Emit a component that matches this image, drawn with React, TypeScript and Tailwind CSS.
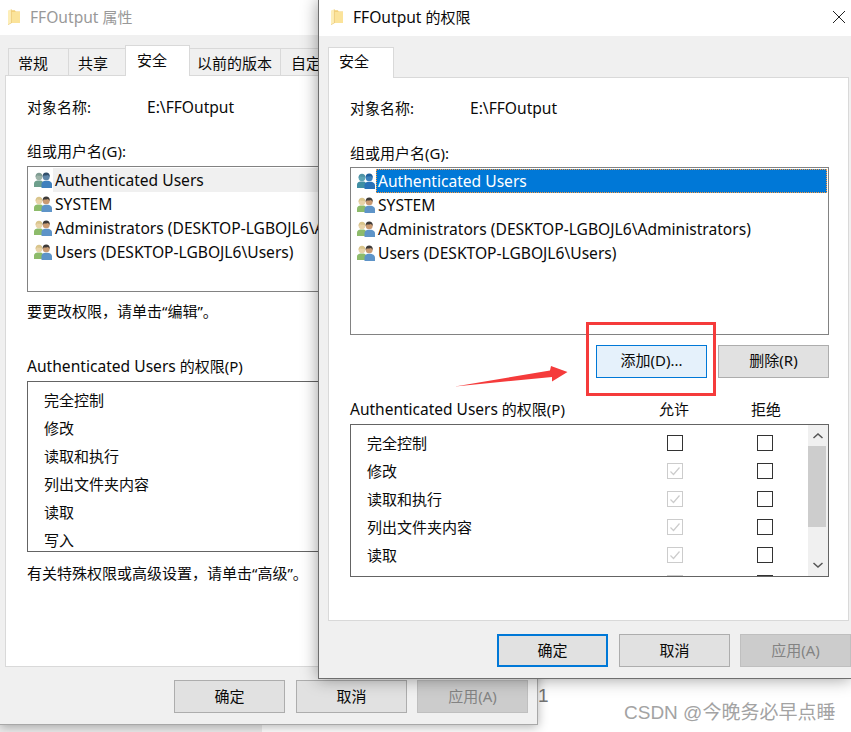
import { ReactNode } from "react";

const users = [
    "Authenticated Users",
    "SYSTEM",
    "Administrators (DESKTOP-LGBOJL6\\Administrators)",
    "Users (DESKTOP-LGBOJL6\\Users)",
];
const backRights = ["完全控制", "修改", "读取和执行", "列出文件夹内容", "读取", "写入"];

function Folder({ className }: { className: string }) {
    return (
        <svg viewBox="0 0 14 18" className={className}>
            <path d="M3 1h5l1 1.500h5V16H3z" fill="#f3cf74" />
            <path d="M4 3h10v13H4z" fill="#fbe39a" />
            <path d="M0 1.500 4 0v16l-4 2z" fill="#fdeeb8" />
            <path d="M4 0v16l-4 2" fill="none" stroke="#e6bf66" strokeWidth="0.6" />
        </svg>
    );
}

// two people side by side, colours change for hover and selected rows
function UsersIcon({ tone = "normal" }: { tone?: "normal" | "hover" | "selected" }) {
    const c = {
        normal: { h1: "#d9c58c", f1: "#e8d3a8", b1: "#8dbb6a", h2: "#3d3a38", f2: "#c99a72", b2: "#5e94c8" },
        hover: { h1: "#7f9c92", f1: "#9db3a8", b1: "#6d9f8c", h2: "#33506b", f2: "#5f86a8", b2: "#3f80bd" },
        selected: { h1: "#4f93a6", f1: "#5ea5b5", b1: "#3f8ea3", h2: "#1f5f9e", f2: "#3a7fbc", b2: "#2a72b8" },
    }[tone];
    return (
        <svg viewBox="0 0 18 16" className="w-[18px] h-4 shrink-0">
            <path d="M0 15v-3.500C0 9.500 2 8.800 3.500 8.500h3C8 8.800 9.500 9.800 9.500 12v3z" fill={c.b1} />
            <circle cx="5" cy="4.800" r="3.400" fill={c.f1} />
            <path d="M1.600 5C1.400 2 3 .8 5 .8S8.500 2 8.400 4.200C7 4 4.500 3.800 3.400 3.200 3 4 2.400 4.800 1.600 5z" fill={c.h1} />
            <path d="M7.500 16v-3.500c0-2.500 2-3.500 3.500-3.700h2.500c2 .2 4.500 1.200 4.500 3.700V16z" fill={c.b2} />
            <circle cx="12.200" cy="4.800" r="3.500" fill={c.f2} />
            <path d="M8.700 5C8.400 2 10 .6 12.200 .6S15.900 2 15.700 4.800C14.800 4.200 14.400 3.400 14 3c-1.500.5-3 .6-4.400.5C9.400 4 9.200 4.600 8.700 5z" fill={c.h2} />
        </svg>
    );
}

function Btn({ children, className }: { children: ReactNode; className: string }) {
    return (
        <div className={`w-[111px] h-[33px] flex items-center justify-center shrink-0 ${className}`}>
            {children}
        </div>
    );
}

function Check({ disabled }: { disabled?: boolean }) {
    if (disabled) {
        return (
            <div className="size-4 border border-[#cccccc] shrink-0 flex items-center justify-center">
                <svg viewBox="0 0 14 14" className="size-3.5">
                    <path d="M2.500 7.500 5.500 10.500 11.500 3.500" fill="none" stroke="#cccccc" strokeWidth="1.200" />
                </svg>
            </div>
        );
    }
    return <div className="size-4 border border-[#333333] shrink-0" />;
}

function BackWindow() {
    return (
        <div className="absolute left-0 top-0 w-[538px] h-[725px] bg-[#f0f0f0] border-r border-b border-[#a8a8a8] shadow-[0_2px_10px_rgba(0,0,0,0.3)] overflow-hidden">
            <div className="h-[35px] pb-0.5 bg-white flex items-center pl-2 gap-2.5 text-[#999999]">
                <Folder className="w-3 h-4" />
                <span><span className="text-[15.6px]">FFOutput</span> 属性</span>
            </div>
            <div className="h-10 flex items-end pl-2">
                <div className="w-[60px] h-[27px] pl-[9px] pt-1 border-t border-l border-[#d9d9d9]">常规</div>
                <div className="w-[57px] h-[27px] pl-[9px] pt-1 border-t border-l border-[#d9d9d9]">共享</div>
                <div className="relative w-[65px] h-[31px] -mb-px pl-[11px] pt-1 bg-white border-t border-x border-[#d9d9d9]">安全</div>
                <div className="w-[90px] h-[27px] pl-[7px] pt-1 border-t border-[#d9d9d9]">以前的版本</div>
                <div className="w-[70px] h-[27px] pl-2.5 pt-1 border-t border-x border-[#d9d9d9]">自定义</div>
            </div>
            <div className="ml-[5px] w-[527px] h-[592px] bg-white border border-[#d9d9d9] pl-[21px] pt-[21px]">
                <div className="flex h-5">
                    <span className="w-[120px]">对象名称:</span>
                    <span className="text-[15.6px]">E:\FFOutput</span>
                </div>
                <div className="mt-6 h-5">组或用户名(G):</div>
                <div className="mt-[5px] w-[480px] h-[126px] border border-[#828282] p-px">
                    {users.map((u, i) => (
                        <div key={u} className="h-6 flex items-center pl-[5px] whitespace-nowrap overflow-hidden">
                            <UsersIcon tone={i === 0 ? "hover" : "normal"} />
                            <span className={`ml-px pl-0.5 h-6 leading-6 flex-1 text-[15.6px] ${i === 0 ? "bg-[#f0f0f0]" : ""}`}>{u}</span>
                        </div>
                    ))}
                </div>
                <div className="mt-[9px] h-5">要更改权限，请单击“编辑”。</div>
                <div className="mt-[35px] h-5"><span className="text-[15.6px]">Authenticated Users</span> 的权限(P)</div>
                <div className="mt-[5px] w-[480px] h-[171px] border border-[#646464] pt-1 pl-4 overflow-hidden">
                    {backRights.map((r) => (
                        <div key={r} className="h-7 flex items-center">{r}</div>
                    ))}
                </div>
                <div className="mt-[11px] h-5">有关特殊权限或高级设置，请单击“高级”。</div>
            </div>
            <div className="mt-[13px] ml-[174px] flex">
                <Btn className="pb-0.5 bg-[#e1e1e1] border border-[#adadad]">确定</Btn>
                <Btn className="pb-0.5 ml-[11px] bg-[#e1e1e1] border border-[#adadad]">取消</Btn>
                <Btn className="pb-0.5 ml-2.5 bg-[#cccccc] border border-[#bfbfbf] text-[#838383]">应用(A)</Btn>
            </div>
        </div>
    );
}

function FrontWindow() {
    const rows = [
        { name: "完全控制", allowed: false },
        { name: "修改", allowed: true },
        { name: "读取和执行", allowed: true },
        { name: "列出文件夹内容", allowed: true },
        { name: "读取", allowed: true },
        { name: "", allowed: true }, // next row, scrolled mostly out of view
    ];
    return (
        <div className="absolute left-[318px] top-0 w-[533px] h-[679px] bg-[#f0f0f0] border-l border-b border-[#6e6e6e] shadow-[0_0_16px_rgba(0,0,0,0.4)] overflow-hidden">
            <div className="h-9 pb-0.5 bg-white flex items-center pl-3 gap-2.5">
                <Folder className="w-3 h-4" />
                <span className="flex-1"><span className="text-[15.6px]">FFOutput</span> 的权限</span>
                <svg viewBox="0 0 12 12" className="size-3 mr-1.5">
                    <path d="M0 0 12 12M12 0 0 12" stroke="#222222" strokeWidth="1" />
                </svg>
            </div>
            <div className="h-[41px] flex items-end pl-[9px]">
                <div className="relative w-[66px] h-[31px] -mb-px pl-2.5 pt-[3px] bg-white border-t border-x border-[#d9d9d9]">安全</div>
            </div>
            <div className="ml-[9px] w-[521px] h-[544px] bg-white border border-[#d9d9d9] pl-[21px] pt-5">
                <div className="flex h-5">
                    <span className="w-[120px]">对象名称:</span>
                    <span className="text-[15.6px]">E:\FFOutput</span>
                </div>
                <div className="mt-[25px] h-5">组或用户名(G):</div>
                <div className="mt-1 w-[479px] h-[168px] border border-[#828282] p-px">
                    {users.map((u, i) => (
                        <div key={u} className="h-6 flex items-center pl-[5px] whitespace-nowrap">
                            <UsersIcon tone={i === 0 ? "selected" : "normal"} />
                            {i === 0 ? (
                                <span className="ml-px pl-0.5 h-6 leading-6 flex-1 text-[15.6px] bg-[#0078d7] text-white outline outline-dotted outline-[#ff9a3c] -outline-offset-1">{u}</span>
                            ) : (
                                <span className="ml-px pl-0.5 h-6 leading-6 text-[15.6px]">{u}</span>
                            )}
                        </div>
                    ))}
                </div>
                <div className="mt-2.5 w-[479px] flex justify-end gap-[11px]">
                    <Btn className="pb-[3px] bg-[#e5f1fb] border border-[#0078d7]">添加(D)...</Btn>
                    <Btn className="pb-[3px] bg-[#e1e1e1] border border-[#adadad]">删除(R)</Btn>
                </div>
                <div className="mt-[21px] flex h-5">
                    <span className="w-[309px]"><span className="text-[15.5px]">Authenticated Users</span> 的权限(P)</span>
                    <span className="w-[92px]">允许</span>
                    <span>拒绝</span>
                </div>
                <div className="mt-[5px] w-[479px] h-[153px] border border-[#646464] flex overflow-hidden">
                    <div className="flex-1 pt-1 pl-4">
                        {rows.map((r) => (
                            <div key={r.name} className="h-7 flex items-center">
                                <span className="w-[300px]">{r.name}</span>
                                <Check disabled={r.allowed} />
                                <div className="ml-[74px]"><Check /></div>
                            </div>
                        ))}
                    </div>
                    <div className="w-5 bg-[#f0f0f0] flex flex-col">
                        <div className="h-[21px] flex items-center justify-center">
                            <svg viewBox="0 0 10 6" className="w-2.5 h-1.5">
                                <path d="M.5 5 5 1l4.500 4" fill="none" stroke="#555555" strokeWidth="1.500" />
                            </svg>
                        </div>
                        <div className="h-[81px] mr-0.5 bg-[#cdcdcd]" />
                        <div className="flex-1 flex items-end justify-center pb-2">
                            <svg viewBox="0 0 10 6" className="w-2.5 h-1.5">
                                <path d="M.5 1 5 5l4.500-4" fill="none" stroke="#555555" strokeWidth="1.500" />
                            </svg>
                        </div>
                    </div>
                </div>
            </div>
            <div className="mt-[13px] ml-[178px] flex">
                <Btn className="pb-0.5 bg-[#e1e1e1] border-2 border-[#0078d7]">确定</Btn>
                <Btn className="pb-0.5 ml-[11px] bg-[#e1e1e1] border border-[#adadad]">取消</Btn>
                <Btn className="pb-0.5 ml-2.5 bg-[#cccccc] border border-[#bfbfbf] text-[#838383]">应用(A)</Btn>
            </div>
        </div>
    );
}

export default function App() {
    return (
        <div className="relative w-[851px] h-[732px] overflow-hidden bg-white text-[15px] leading-5 text-[#0a0a0a] [font-family:'Noto_Sans','Noto_Sans_CJK_SC',sans-serif]">
            {/* window further down the desktop, only its top edge shows */}
            <div className="absolute left-0 top-[724px] w-[262px] h-2 bg-[#ececec]" />
            <span className="absolute left-[538px] top-[686px] text-[19px] text-[#777777] [font-family:'Liberation_Sans',sans-serif]">1</span>
            <span className="absolute left-[624px] top-[703px] text-[19px] text-[#a3a3a3] whitespace-nowrap [font-family:'Liberation_Sans','Noto_Sans_CJK_SC',sans-serif]">CSDN @今晚务必早点睡</span>

            <BackWindow />
            <FrontWindow />

            {/* red annotation over the screenshot */}
            <div className="absolute left-[586px] top-[322px] w-[130px] h-[74px] border-[3px] border-[#f53b3b]" />
            <svg viewBox="0 0 851 732" className="absolute inset-0 w-[851px] h-[732px] pointer-events-none">
                <polygon points="455,386.500 550,370.500 551,366 567.500,372 552,381.500 552,377" fill="#f53b3b" />
            </svg>
        </div>
    );
}
